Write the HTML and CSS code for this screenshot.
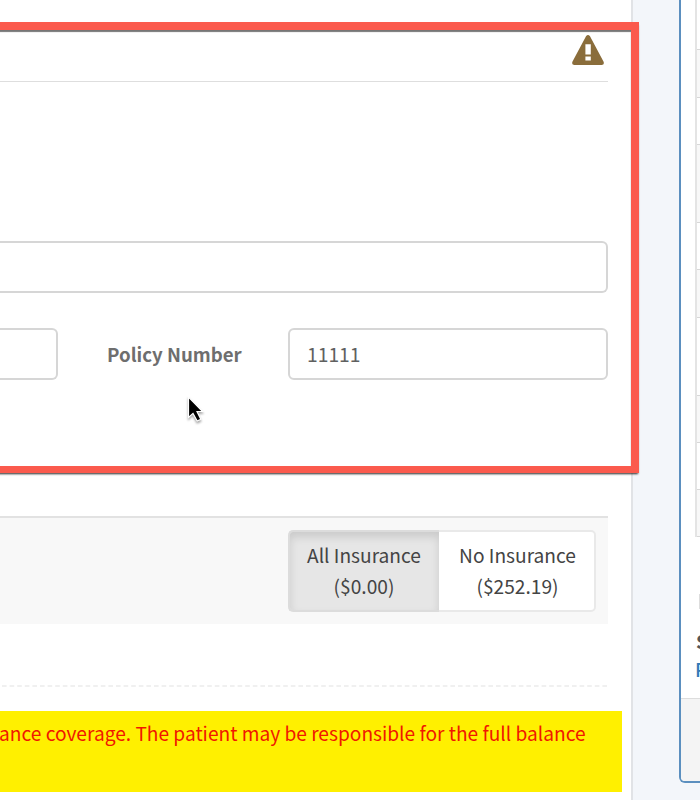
FILE: index.html
```
<!DOCTYPE html>
<html lang="en">
<head>
<meta charset="utf-8">
<title>Insurance</title>
<link rel="stylesheet" href="styles.css">
</head>
<body>
<div class="page">
  <main class="main">
    <section class="policy">
      <header class="policy-head">
        <svg class="warning" viewBox="0 0 32 30"><path fill="#8a6d3b" fill-rule="evenodd" d="M14 1.2Q16-1 18 1.2L31.6 26.8Q32.6 30 29.6 30H2.4Q-.6 30 .4 26.8ZM13.4 9.2V19.6H18.8V9.2ZM13.4 21.4V25.6H18.8V21.4Z"/></svg>
      </header>
      <div class="field field-wide"></div>
      <div class="field-row">
        <div class="field field-left"></div>
        <label class="label">Policy Number</label>
        <div class="field field-number">11111</div>
      </div>
    </section>
    <section class="toolbar">
      <div class="btn btn-active">All Insurance<br>($0.00)</div>
      <div class="btn btn-plain">No Insurance<br>($252.19)</div>
    </section>
    <svg class="dashes" viewBox="0 0 608 2"><path d="M2 1H608" stroke="#ebebeb" stroke-width="1.4" stroke-dasharray="4.6 3"/></svg>
    <div class="alert"><span>ance coverage. The patient may be responsible for the full balance</span></div>
  </main>
  <aside class="side">
    <div class="table">
      <div class="r r1"></div><div class="r r2 odd"></div><div class="r r3"></div><div class="r r4 odd"></div><div class="r r5"></div><div class="r r6 odd"></div><div class="r r7"></div><div class="r r8 odd"></div><div class="r r9"></div><div class="r r10 odd"></div>
    </div>
    <div class="side-text">
      <div class="divider"></div>
      <div class="strong">S</div>
      <div class="link">P</div>
    </div>
    <div class="side-foot"></div>
  </aside>
  <div class="highlight"></div>
  <svg class="cursor" viewBox="0 0 22 32"><path fill="#000" stroke="#fff" stroke-width="1.2" d="M3.5 2V22.5L8 18.4L12.2 26L15.8 24.2L12 16.5H17.6Z"/></svg>
</div>
</body>
</html>
```
FILE: styles.css
```
* { box-sizing: border-box; }
body {
  margin: 0;
  font-family: "Noto Sans CJK JP", "Noto Sans", sans-serif;
  font-size: 19.15px;
  color: #444;
  background: #f3f6fa;
}
.page {
  position: relative;
  display: flex;
  width: 700px;
  height: 800px;
  overflow: hidden;
}
.main {
  flex: none;
  width: 633px;
  background: #fff;
  border-right: 2px solid #e1e3e6;
}
.policy { height: 516px; width: 608px; }
.policy-head {
  height: 82px;
  padding: 35px 4px 0 0;
  border-bottom: 1px solid #dedede;
  text-align: right;
}
.warning { width: 32px; height: 30px; }
.field {
  height: 52px;
  border: 2px solid #d6d6d6;
  border-radius: 6px;
  background: #fff;
}
.field-wide {
  margin-top: 159px;
  border-left: 0;
  border-radius: 0 6px 6px 0;
}
.field-row { display: flex; margin-top: 35px; }
.field-left {
  width: 58px;
  border-left: 0;
  border-radius: 0 6px 6px 0;
}
.label {
  width: 181px;
  margin-left: 49px;
  line-height: 52px;
  font-size: 18.65px;
  font-weight: 700;
  color: #6e6e6e;
}
.field-number {
  width: 320px;
  padding-left: 17px;
  line-height: 48px;
  font-size: 19.3px;
  color: #606060;
}
.toolbar {
  display: flex;
  justify-content: flex-end;
  width: 608px;
  height: 108px;
  padding: 12px 12px 0 0;
  background: #f8f8f8;
  border-top: 2px solid #e2e2e2;
}
.btn {
  height: 82px;
  padding-top: 8px;
  border: 2px solid #e9e9e9;
  text-align: center;
  line-height: 31px;
}
.btn-active {
  width: 151px;
  padding-right: 1px;
  border-color: #dcdcdc;
  border-right: 0;
  border-radius: 5px 0 0 5px;
  background: #e6e6e6;
  box-shadow: inset 0 5px 8px rgba(0, 0, 0, .12);
}
.btn-plain {
  width: 157px;
  padding-left: 2px;
  border-left: 0;
  border-radius: 0 5px 5px 0;
  background: #fff;
}
.dashes {
  display: block;
  width: 608px;
  height: 2px;
  margin-top: 61px;
}
.alert {
  display: flex;
  width: 622px;
  height: 81px;
  margin-top: 24px;
  padding-top: 7px;
  background: #fff000;
  color: #f01800;
  line-height: 31px;
  white-space: nowrap;
}
.alert span { margin-left: -1px; }
.side {
  flex: none;
  width: 60px;
  height: 783px;
  margin-left: 46px;
  border: 2px solid #5b8fbf;
  border-top: 0;
  border-radius: 0 0 0 6px;
  background: #fff;
  overflow: hidden;
}
.table {
  margin-left: 14px;
  border-left: 2px solid #e4e4e4;
}
.r { height: 47px; border-bottom: 1px solid #d8d8d8; }
.odd { background: #f8f8f8; }
.r1 { height: 50px; }
.r4, .r7 { height: 78px; }
.r2, .r6 { height: 48px; }
.side-text { height: 161px; padding: 57px 0 0 15px; line-height: 28px; }
.divider { height: 15px; width: 6px; margin-left: 3px; border-left: 2px solid #ddd; }
.strong { margin-top: 18px; font-weight: 700; color: #555; }
.link { margin-left: -1px; color: #337ab7; font-weight: 500; }
.side-foot { height: 90px; background: #f4f4f4; border-top: 1px solid #ddd; }
.highlight {
  position: absolute;
  left: -20px;
  top: 22px;
  width: 659px;
  height: 451px;
  border: solid #fb5a4d;
  border-width: 8px 8px 7px;
  box-shadow: 0 2px 2px -1px rgba(40, 40, 40, 1), inset 0 2px 1px rgba(60, 60, 60, .7);
}
.cursor {
  position: absolute;
  left: 185px;
  top: 395px;
  width: 22px;
  height: 32px;
  filter: drop-shadow(0 2px 1px rgba(0, 0, 0, .35));
}
```
